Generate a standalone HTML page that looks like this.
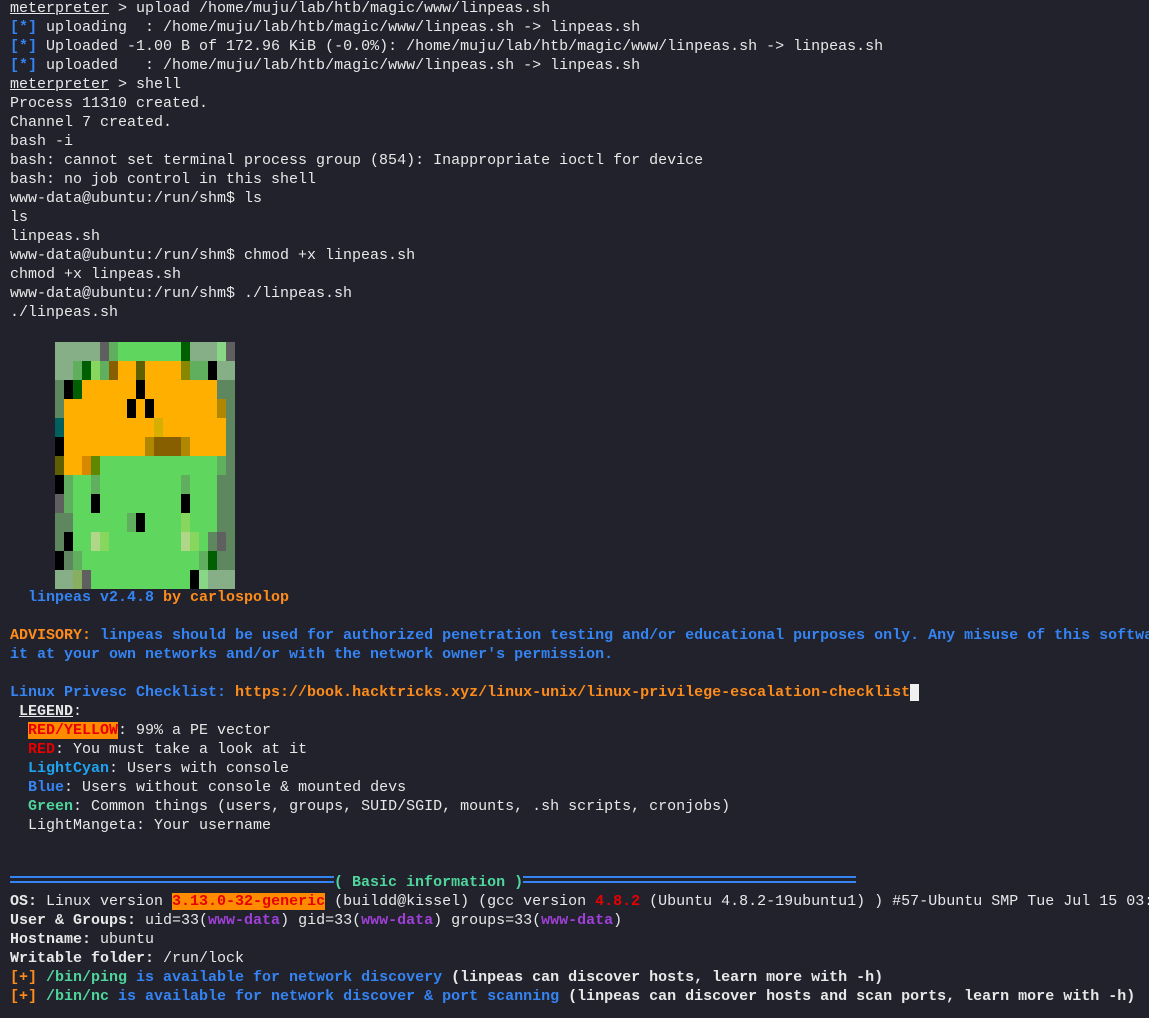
<!DOCTYPE html>
<html><head><meta charset="utf-8"><style>
html,body{margin:0;padding:0;background:#21222c;width:1149px;height:1018px;overflow:hidden}
pre{position:absolute;left:10px;top:-1px;width:1139px;height:1019px;overflow:hidden;margin:0;font-family:"Liberation Mono","DejaVu Sans Mono",monospace;font-size:15px;line-height:19px;color:#e8e8e8;white-space:pre}
.u{text-decoration:underline}
.b{font-weight:bold}
.bl{color:#3584f4}
.o{color:#ff8c1a}
.r{color:#e80000}
.c{color:#1ea4f0}
.g{color:#4fd69c}
.p{color:#a040d8}
.hl{background:#ff8c00;color:#e80000}
.dl{display:inline-block;width:36ch;height:3px;border-top:2px solid #3584f4;border-bottom:2px solid #3584f4;vertical-align:3px}
.dr{width:37ch}
.cur{background:#f0f0f0;color:#21222c}
svg{position:absolute;left:55px;top:342px}
</style></head><body>
<pre><span class="u">meterpreter</span> &gt; upload /home/muju/lab/htb/magic/www/linpeas.sh
<span class="b bl">[*]</span> uploading  : /home/muju/lab/htb/magic/www/linpeas.sh -&gt; linpeas.sh
<span class="b bl">[*]</span> Uploaded -1.00 B of 172.96 KiB (-0.0%): /home/muju/lab/htb/magic/www/linpeas.sh -&gt; linpeas.sh
<span class="b bl">[*]</span> uploaded   : /home/muju/lab/htb/magic/www/linpeas.sh -&gt; linpeas.sh
<span class="u">meterpreter</span> &gt; shell
Process 11310 created.
Channel 7 created.
bash -i
bash: cannot set terminal process group (854): Inappropriate ioctl for device
bash: no job control in this shell
www-data@ubuntu:/run/shm$ ls
ls
linpeas.sh
www-data@ubuntu:/run/shm$ chmod +x linpeas.sh
chmod +x linpeas.sh
www-data@ubuntu:/run/shm$ ./linpeas.sh
./linpeas.sh














<span class="b bl">  linpeas v2.4.8 </span><span class="b o">by carlospolop</span>

<span class="b o">ADVISORY: </span><span class="b bl">linpeas should be used for authorized penetration testing and/or educational purposes only. Any misuse of this software will not be the responsibility of the author or of any other collaborator. Use</span>
<span class="b bl">it at your own networks and/or with the network owner's permission.</span>

<span class="b bl">Linux Privesc Checklist: </span><span class="b o">https://book.hacktricks.xyz/linux-unix/linux-privilege-escalation-checklist</span><span class="cur"> </span>
 <span class="b u">LEGEND</span>:
  <span class="b hl">RED/YELLOW</span>: 99% a PE vector
  <span class="b r">RED</span>: You must take a look at it
  <span class="b c">LightCyan</span>: Users with console
  <span class="b bl">Blue</span>: Users without console &amp; mounted devs
  <span class="b g">Green</span>: Common things (users, groups, SUID/SGID, mounts, .sh scripts, cronjobs)
  LightMangeta: Your username


<span class="dl"></span><span class="b g">( Basic information )</span><span class="dl dr"></span>
<span class="b">OS:</span> Linux version <span class="b hl">3.13.0-32-generic</span> (buildd@kissel) (gcc version <span class="b r">4.8.2</span> (Ubuntu 4.8.2-19ubuntu1) ) #57-Ubuntu SMP Tue Jul 15 03:51:08 UTC 2014
<span class="b">User &amp; Groups:</span> uid=33(<span class="b p">www-data</span>) gid=33(<span class="b p">www-data</span>) groups=33(<span class="b p">www-data</span>)
<span class="b">Hostname:</span> ubuntu
<span class="b">Writable folder:</span> /run/lock
<span class="b o">[+] </span><span class="b g">/bin/ping</span><span class="b bl"> is available for network discovery</span><span class="b"> (linpeas can discover hosts, learn more with -h)</span>
<span class="b o">[+] </span><span class="b g">/bin/nc</span><span class="b bl"> is available for network discover &amp; port scanning</span><span class="b"> (linpeas can discover hosts and scan ports, learn more with -h)</span>
</pre>
<svg width="180" height="247" viewBox="0 0 180 247" shape-rendering="crispEdges">
<g>
<rect x="0" y="0" width="45" height="19" fill="#87af87"/><rect x="45" y="0" width="9" height="19" fill="#5f5f5f"/><rect x="54" y="0" width="9" height="19" fill="#5faf5f"/><rect x="63" y="0" width="63" height="19" fill="#5fd75f"/><rect x="126" y="0" width="9" height="19" fill="#005f00"/><rect x="135" y="0" width="27" height="19" fill="#87af87"/><rect x="162" y="0" width="9" height="19" fill="#87d787"/><rect x="171" y="0" width="9" height="19" fill="#5f5f5f"/>
<rect x="0" y="19" width="18" height="19" fill="#87af87"/><rect x="18" y="19" width="9" height="19" fill="#5faf5f"/><rect x="27" y="19" width="9" height="19" fill="#005f00"/><rect x="36" y="19" width="9" height="19" fill="#87d75f"/><rect x="45" y="19" width="9" height="19" fill="#5faf5f"/><rect x="54" y="19" width="9" height="19" fill="#875f00"/><rect x="63" y="19" width="18" height="19" fill="#ffaf00"/><rect x="81" y="19" width="9" height="19" fill="#5f5f00"/><rect x="90" y="19" width="36" height="19" fill="#ffaf00"/><rect x="126" y="19" width="9" height="19" fill="#878700"/><rect x="135" y="19" width="18" height="19" fill="#5faf5f"/><rect x="153" y="19" width="9" height="19" fill="#000"/><rect x="162" y="19" width="18" height="19" fill="#87af87"/>
<rect x="0" y="38" width="9" height="19" fill="#5f875f"/><rect x="9" y="38" width="9" height="19" fill="#000"/><rect x="18" y="38" width="9" height="19" fill="#005f00"/><rect x="27" y="38" width="54" height="19" fill="#ffaf00"/><rect x="81" y="38" width="9" height="19" fill="#000"/><rect x="90" y="38" width="72" height="19" fill="#ffaf00"/><rect x="162" y="38" width="18" height="19" fill="#5f875f"/>
<rect x="0" y="57" width="9" height="19" fill="#5f875f"/><rect x="9" y="57" width="63" height="19" fill="#ffaf00"/><rect x="72" y="57" width="9" height="19" fill="#000"/><rect x="81" y="57" width="9" height="19" fill="#ffaf00"/><rect x="90" y="57" width="9" height="19" fill="#000"/><rect x="99" y="57" width="63" height="19" fill="#ffaf00"/><rect x="162" y="57" width="9" height="19" fill="#af8700"/><rect x="171" y="57" width="9" height="19" fill="#5f875f"/>
<rect x="0" y="76" width="9" height="19" fill="#005f5f"/><rect x="9" y="76" width="90" height="19" fill="#ffaf00"/><rect x="99" y="76" width="9" height="19" fill="#d7af00"/><rect x="108" y="76" width="63" height="19" fill="#ffaf00"/><rect x="171" y="76" width="9" height="19" fill="#5f875f"/>
<rect x="0" y="95" width="9" height="19" fill="#000"/><rect x="9" y="95" width="81" height="19" fill="#ffaf00"/><rect x="90" y="95" width="9" height="19" fill="#af8700"/><rect x="99" y="95" width="27" height="19" fill="#875f00"/><rect x="126" y="95" width="9" height="19" fill="#af8700"/><rect x="135" y="95" width="36" height="19" fill="#ffaf00"/><rect x="171" y="95" width="9" height="19" fill="#5f875f"/>
<rect x="0" y="114" width="9" height="19" fill="#5f5f00"/><rect x="9" y="114" width="18" height="19" fill="#ffaf00"/><rect x="27" y="114" width="9" height="19" fill="#d78700"/><rect x="36" y="114" width="9" height="19" fill="#5f8700"/><rect x="45" y="114" width="117" height="19" fill="#5fd75f"/><rect x="162" y="114" width="9" height="19" fill="#5faf5f"/><rect x="171" y="114" width="9" height="19" fill="#5f875f"/>
<rect x="0" y="133" width="9" height="19" fill="#000"/><rect x="9" y="133" width="9" height="19" fill="#5faf5f"/><rect x="18" y="133" width="18" height="19" fill="#5fd75f"/><rect x="36" y="133" width="9" height="19" fill="#5faf5f"/><rect x="45" y="133" width="81" height="19" fill="#5fd75f"/><rect x="126" y="133" width="9" height="19" fill="#5faf5f"/><rect x="135" y="133" width="27" height="19" fill="#5fd75f"/><rect x="162" y="133" width="18" height="19" fill="#5f875f"/>
<rect x="0" y="152" width="9" height="19" fill="#5f5f5f"/><rect x="9" y="152" width="9" height="19" fill="#5faf5f"/><rect x="18" y="152" width="18" height="19" fill="#5fd75f"/><rect x="36" y="152" width="9" height="19" fill="#000"/><rect x="45" y="152" width="81" height="19" fill="#5fd75f"/><rect x="126" y="152" width="9" height="19" fill="#000"/><rect x="135" y="152" width="27" height="19" fill="#5fd75f"/><rect x="162" y="152" width="18" height="19" fill="#5f875f"/>
<rect x="0" y="171" width="18" height="19" fill="#5f875f"/><rect x="18" y="171" width="54" height="19" fill="#5fd75f"/><rect x="72" y="171" width="9" height="19" fill="#5faf5f"/><rect x="81" y="171" width="9" height="19" fill="#000"/><rect x="90" y="171" width="36" height="19" fill="#5fd75f"/><rect x="126" y="171" width="9" height="19" fill="#87d75f"/><rect x="135" y="171" width="27" height="19" fill="#5fd75f"/><rect x="162" y="171" width="18" height="19" fill="#5f875f"/>
<rect x="0" y="190" width="9" height="19" fill="#5f875f"/><rect x="9" y="190" width="9" height="19" fill="#000"/><rect x="18" y="190" width="18" height="19" fill="#5fd75f"/><rect x="36" y="190" width="9" height="19" fill="#afd787"/><rect x="45" y="190" width="9" height="19" fill="#87d75f"/><rect x="54" y="190" width="72" height="19" fill="#5fd75f"/><rect x="126" y="190" width="9" height="19" fill="#afd787"/><rect x="135" y="190" width="9" height="19" fill="#87d75f"/><rect x="144" y="190" width="9" height="19" fill="#5fd75f"/><rect x="153" y="190" width="9" height="19" fill="#5f875f"/><rect x="162" y="190" width="9" height="19" fill="#5f5f5f"/><rect x="171" y="190" width="9" height="19" fill="#5f875f"/>
<rect x="0" y="209" width="9" height="19" fill="#000"/><rect x="9" y="209" width="9" height="19" fill="#5f875f"/><rect x="18" y="209" width="9" height="19" fill="#5faf5f"/><rect x="27" y="209" width="117" height="19" fill="#5fd75f"/><rect x="144" y="209" width="9" height="19" fill="#5faf5f"/><rect x="153" y="209" width="9" height="19" fill="#005f00"/><rect x="162" y="209" width="18" height="19" fill="#5f875f"/>
<rect x="0" y="228" width="18" height="19" fill="#87af87"/><rect x="18" y="228" width="9" height="19" fill="#87af5f"/><rect x="27" y="228" width="9" height="19" fill="#5f5f5f"/><rect x="36" y="228" width="99" height="19" fill="#5fd75f"/><rect x="135" y="228" width="9" height="19" fill="#000"/><rect x="144" y="228" width="9" height="19" fill="#87d787"/><rect x="153" y="228" width="27" height="19" fill="#87af87"/>
</g></svg>
</body></html>
